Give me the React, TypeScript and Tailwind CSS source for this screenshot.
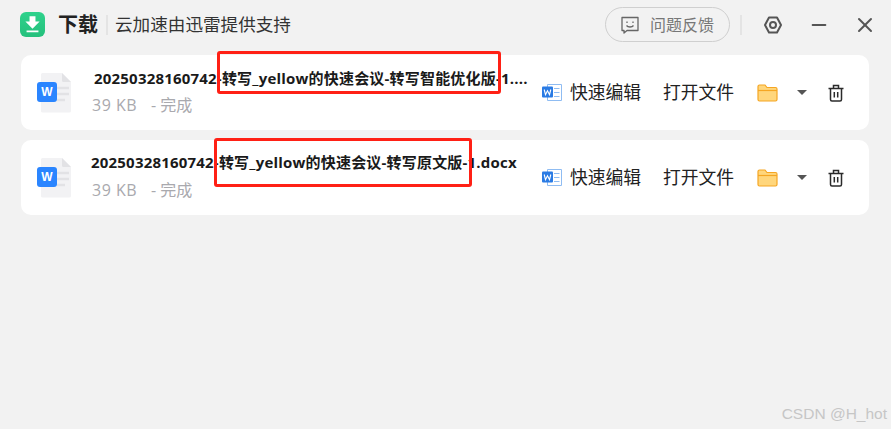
import React from 'react';
import { Minus, X } from 'lucide-react';

const cjk = "font-['Open_Sans','Noto_Sans_CJK_SC',sans-serif]";

const WordBadge = () => (
  <svg viewBox="0 0 20 17" className="w-[20px] h-[17px]">
    <path d="M5.500 0.500h14v16h-14z" fill="#fff" stroke="#8fbcf2" strokeWidth="1" />
    <path d="M12 4.500h5.500M12 8.500h5.500M12 12.500h5.500" stroke="#8fbcf2" strokeWidth="1.200" />
    <rect x="0" y="2.500" width="11" height="11" rx="1" fill="#2a7be4" />
    <path d="M2.200 5.500l1.300 5.200 2-4 2 4 1.300-5.200" fill="none" stroke="#fff" strokeWidth="1.100" />
  </svg>
);

const FileIcon = () => (
  <div className="relative w-[38px] h-[40px] shrink-0">
    <svg viewBox="0 0 38 40" className="w-[38px] h-[40px]">
      <path d="M4 1.500a1.500 1.500 0 0 1 1.500-1.500H25l9 9v29a1.500 1.500 0 0 1-1.500 1.500h-27A1.500 1.500 0 0 1 4 38.500z" fill="#f2f2f4" />
      <path d="M25 0l9 9h-7.500A1.500 1.500 0 0 1 25 7.500z" fill="#e2e2e5" />
      <path d="M20 15h12M20 21h12M20 27h8" stroke="#e2e2e5" strokeWidth="2.500" />
    </svg>
    <div className="absolute left-0 top-[9px] w-[20px] h-[20px] rounded-[3px] bg-[#2a85ff] flex items-center justify-center">
      <span className="text-white text-[12px] font-bold leading-none font-['Liberation_Sans',sans-serif]">W</span>
    </div>
  </div>
);

const FolderIcon = () => (
  <svg viewBox="0 0 21 18" className="w-[21px] h-[18px]">
    <path d="M1 2.500A1.500 1.500 0 0 1 2.500 1H8l2 2.500h8.500A1.500 1.500 0 0 1 20 5v10.500a1.500 1.500 0 0 1-1.500 1.500h-16A1.500 1.500 0 0 1 1 15.500z" fill="#ffd67c" stroke="#f5a623" strokeWidth="1.200" />
    <path d="M1 6.500h19" stroke="#f5a623" strokeWidth="1.200" />
  </svg>
);

const TrashIcon = () => (
  <svg viewBox="0 0 18 18" className="w-[18px] h-[18px]" fill="none" stroke="#2b2b2b" strokeWidth="1.500">
    <path d="M1.500 4.500h15M6.500 4V1.500h5V4M3.500 4.500V15.500a1.500 1.500 0 0 0 1.500 1.500h8a1.500 1.500 0 0 0 1.500-1.500V4.500M7.300 8v5.500M10.700 8v5.500" />
  </svg>
);

interface Row {
  name: string;
  textBox: string;
  subLine: string;
  box: string;
}

const rows: Row[] = [
  {
    name: '20250328160742-转写_yellow的快速会议-转写智能优化版-1....',
    textBox: 'ml-[19px] pb-[2px]',
    subLine: 'ml-[-2px] mt-[7px]',
    box: 'left-[196px] w-[284px] h-[43px] top-[-4px]',
  },
  {
    name: '20250328160742-转写_yellow的快速会议-转写原文版-1.docx',
    textBox: 'ml-[16px] pb-[3px]',
    subLine: 'ml-[1px] mt-[8px]',
    box: 'left-[193px] w-[258px] h-[49px] top-[-2px]',
  },
];

const FileRow = ({ row }: { row: Row }) => (
  <div className="relative h-[75px] bg-white rounded-[10px] flex items-center pl-[16px] pr-[24px]">
    <FileIcon />
    <div className={`${row.textBox} flex-1 min-w-0`}>
      <div className="text-[15px] leading-[20px] font-bold text-[#1a1a1a] whitespace-nowrap tracking-[0.2px]">{row.name}</div>
      <div className={`${row.subLine} flex text-[16px] leading-[20px] text-[#a9a9ae] whitespace-nowrap`}>
        <span className="w-[59px] tracking-[0.5px]">39 KB</span>
        <span>- 完成</span>
      </div>
    </div>
    <div className="flex items-center shrink-0">
      <WordBadge />
      <span className="ml-[8px] w-[93px] text-[17.800px] text-[#222]">快速编辑</span>
      <span className="w-[94px] text-[17.800px] text-[#222]">打开文件</span>
      <FolderIcon />
      <span className="ml-[19px] w-0 h-0 border-x-[5px] border-x-transparent border-t-[5px] border-t-[#555]" />
      <span className="ml-[20px] flex"><TrashIcon /></span>
    </div>
    <div className={`absolute ${row.box} border-[3px] border-[#ff2015] rounded-[3px]`} />
  </div>
);

export default function App() {
  return (
    <div className={`${cjk} w-[891px] h-[429px] bg-[#f2f2f2] relative overflow-hidden`}>
      <header className="h-[55px] pb-[6px] flex items-center pl-[20px] pr-[14px]">
        <div className="w-[25px] h-[25px] rounded-[6px] bg-gradient-to-b from-[#2ed28c] to-[#25c07c] flex items-center justify-center">
          <svg viewBox="0 0 16 16" className="w-[19px] h-[19px]" fill="#fff">
            <path d="M5.500 1h5v4.500H14L8 11.500 2 5.500h3.500zM3 13h10v1.500H3z" />
          </svg>
        </div>
        <span className="ml-[13px] text-[20px] font-bold text-[#222]">下载</span>
        <span className="ml-[8px] w-[2px] h-[20px] bg-[#e4e4e4]" />
        <span className="ml-[7px] text-[17.600px] text-[#333]">云加速由迅雷提供支持</span>
        <div className="ml-auto flex items-center">
          <button className="w-[125px] h-[35px] rounded-full border border-[#cfcfcf] flex items-center pl-[14px]">
            <svg viewBox="0 0 20 20" className="w-[20px] h-[20px]" fill="none" stroke="#666" strokeWidth="1.300">
              <path d="M2 2.500h16v13H7l-3 2.500v-2.500H2z" strokeLinejoin="round" />
              <path d="M7 6.500v1.500M13 6.500v1.500M6.500 10.500c1.500 2 5.500 2 7 0" />
            </svg>
            <span className="ml-[10px] text-[16px] text-[#777]">问题反馈</span>
          </button>
          <span className="ml-[10px] w-[2px] h-[20px] bg-[#e4e4e4]" />
          <svg viewBox="0 0 20 20" className="ml-[21px] w-[20px] h-[20px]" fill="none" stroke="#555" strokeWidth="2">
            <path d="M6 2.500h8l4 7.500-4 7.500H6L2 10z" strokeLinejoin="round" />
            <circle cx="10" cy="10" r="3" />
          </svg>
          <Minus className="ml-[25px] w-[22px] h-[22px] text-[#555]" strokeWidth={2} />
          <X className="ml-[23px] w-[24px] h-[24px] text-[#555]" strokeWidth={2} />
        </div>
      </header>
      <main className="pl-[21px] flex flex-col gap-[10px] w-[869px]">
        {rows.map((r) => (
          <FileRow key={r.name} row={r} />
        ))}
      </main>
      <div className="absolute right-[4px] bottom-[4px] text-[15.500px] text-[#c6c6c6] font-['Liberation_Sans',sans-serif]">CSDN @H_hot</div>
    </div>
  );
}
